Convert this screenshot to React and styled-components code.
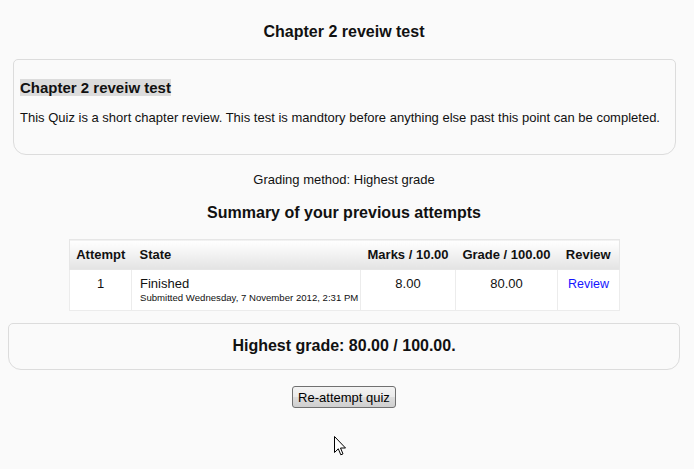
import React from "react";
import styled, { createGlobalStyle } from "styled-components";

const GlobalStyle = createGlobalStyle`
  html, body {
    margin: 0;
    padding: 0;
    background: #fafafa;
  }
  body {
    font-family: "Liberation Sans", Arial, sans-serif;
    color: #111;
  }
`;

const Page = styled.div`
  position: relative;
  width: 688px;
  height: 469px;
  padding-top: 22px;
  box-sizing: border-box;
  display: flex;
  flex-direction: column;
  align-items: stretch;
`;

const Title = styled.h2`
  margin: 0;
  font-size: 16px;
  line-height: 20px;
  font-weight: bold;
  text-align: center;
`;

const Box = styled.div`
  margin: ${(p) => p.$margin};
  border: 1px solid #dcdcdc;
  border-radius: 5px 5px 13px 13px;
  box-sizing: border-box;
  padding: ${(p) => p.$padding};
  text-align: ${(p) => (p.$center ? "center" : "left")};
`;

const IntroHeading = styled.div`
  font-size: 15px;
  line-height: 17px;
  font-weight: bold;
  span {
    background: #dcdcdc;
  }
`;

const IntroText = styled.p`
  margin: 14px 0 0 0;
  font-size: 13px;
  line-height: 16px;
  white-space: nowrap;
`;

const Info = styled.div`
  margin-top: 17px;
  font-size: 13px;
  line-height: 16px;
  text-align: center;
`;

const SubTitle = styled.h3`
  margin: 15px 0 0 0;
  font-size: 16px;
  line-height: 20px;
  font-weight: bold;
  text-align: center;
`;

const Table = styled.table`
  margin: 16px 0 0 69px;
  width: 550px;
  table-layout: fixed;
  border-collapse: collapse;
  border: 1px solid #e6e6e6;
  font-size: 13px;
  th {
    height: 29px;
    padding: 0 4px;
    font-weight: bold;
    background: linear-gradient(to bottom, #ffffff 0%, #f3f3f3 45%, #e3e3e3 100%);
    border-bottom: 1px solid #e6e6e6;
    text-align: center;
    white-space: nowrap;
  }
  td {
    background: #fff;
    border: 1px solid #ececec;
    padding: 6px 4px 6px;
    vertical-align: top;
    text-align: center;
    line-height: 16px;
  }
  th.state, td.state {
    text-align: left;
    padding-left: 8px;
  }
`;

const Small = styled.div`
  font-size: 9.6px;
  line-height: 12px;
  white-space: nowrap;
`;

const ReviewLink = styled.a`
  color: #1515ff;
  text-decoration: none;
  font-size: 12.5px;
`;

const Grade = styled.div`
  font-size: 16px;
  line-height: 20px;
  font-weight: bold;
`;

const ButtonRow = styled.div`
  margin-top: 16px;
  display: flex;
  justify-content: center;
`;

const Button = styled.button`
  font-family: "Liberation Sans", Arial, sans-serif;
  font-size: 13px;
  height: 22px;
  padding: 0 5px;
  color: #000;
  border: 1px solid #707070;
  border-radius: 3px;
  background: linear-gradient(to bottom, #f3f3f3 0%, #ebebeb 50%, #dddddd 51%, #cfcfcf 100%);
`;

const Cursor = styled.svg`
  position: absolute;
  left: 334px;
  top: 436px;
`;

const App = () => {
  return (
    <>
      <GlobalStyle />
      <Page>
        <Title>Chapter 2 reveiw test</Title>
        <Box $margin="17px 12px 0 13px" $padding="19px 0 28px 6px">
          <IntroHeading>
            <span>Chapter 2 reveiw test</span>
          </IntroHeading>
          <IntroText>
            This Quiz is a short chapter review. This test is mandtory before anything else past this point can be completed.
          </IntroText>
        </Box>
        <Info>Grading method: Highest grade</Info>
        <SubTitle>Summary of your previous attempts</SubTitle>
        <Table>
          <colgroup>
            <col style={{ width: 62 }} />
            <col style={{ width: 229 }} />
            <col style={{ width: 95 }} />
            <col style={{ width: 102 }} />
            <col style={{ width: 62 }} />
          </colgroup>
          <thead>
            <tr>
              <th>Attempt</th>
              <th className="state">State</th>
              <th>Marks / 10.00</th>
              <th>Grade / 100.00</th>
              <th>Review</th>
            </tr>
          </thead>
          <tbody>
            <tr>
              <td>1</td>
              <td className="state">
                Finished
                <Small>Submitted Wednesday, 7 November 2012, 2:31 PM</Small>
              </td>
              <td>8.00</td>
              <td>80.00</td>
              <td>
                <ReviewLink href="#">Review</ReviewLink>
              </td>
            </tr>
          </tbody>
        </Table>
        <Box $margin="12px 8px 0 8px" $padding="12px 0 13px" $center>
          <Grade>Highest grade: 80.00 / 100.00.</Grade>
        </Box>
        <ButtonRow>
          <Button>Re-attempt quiz</Button>
        </ButtonRow>
        <Cursor width="13" height="21" viewBox="0 0 13 21">
          <path
            d="M0.5 0.5 L0.5 16.5 L4.3 12.8 L6.8 18.8 L9 17.9 L6.5 12 L11.5 12 Z"
            fill="#fff"
            stroke="#000"
            strokeWidth="1"
            strokeLinejoin="miter"
          />
        </Cursor>
      </Page>
    </>
  );
};

export default App;
